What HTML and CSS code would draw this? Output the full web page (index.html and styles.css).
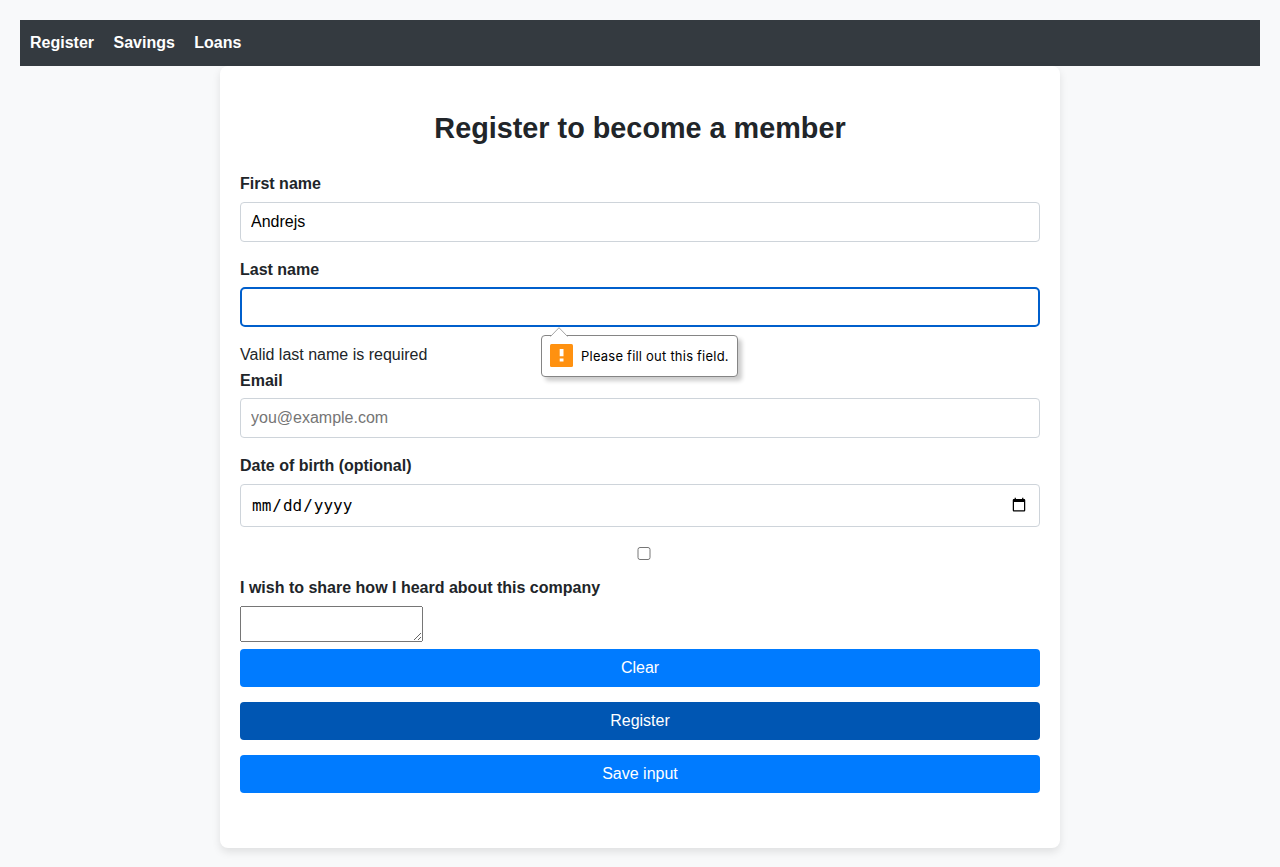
FILE: index.html
```html
<!DOCTYPE html>
<html lang="en">
<head>
<meta charset="utf-8">
<title>Register</title>
<link rel="stylesheet" href="styles.css">
</head>
<body>
<nav class="navbar">
  <a href="#">Register</a>
  <a href="#">Savings</a>
  <a href="#">Loans</a>
</nav>
<main class="card">
  <h1>Register to become a member</h1>
  <form novalidate>
    <label for="first">First name</label>
    <input class="field" id="first" type="text" value="Andrejs">
    <label for="last">Last name</label>
    <div class="anchor">
      <input class="field field-active" id="last" type="text">
      <div class="bubble">
        <svg class="bubble-arrow" width="18" height="10" viewBox="0 0 18 10"><path d="M.5 9.5 9 .7 17.500 9.500" fill="#fff" stroke="#a5a5a5"/></svg>
        <svg class="bubble-icon" width="23" height="23" viewBox="0 0 23 23"><rect width="23" height="23" rx="1.500" fill="#ff9110"/><path d="M9.700 5h3.800v7.300H9.700zM9.700 14.500h3.800v3H9.700z" fill="#fff"/></svg>
        <span>Please fill out this field.</span>
      </div>
    </div>
    <div class="error">Valid last name is required</div>
    <label for="email">Email</label>
    <input class="field" id="email" type="email" placeholder="you@example.com">
    <label for="dob">Date of birth (optional)</label>
    <input class="field field-date" id="dob" type="date">
    <input class="check" id="share" type="checkbox">
    <label for="share">I wish to share how I heard about this company</label>
    <textarea></textarea>
    <button class="btn" type="button">Clear</button>
    <button class="btn btn-pressed" type="button">Register</button>
    <button class="btn" type="button">Save input</button>
  </form>
</main>
</body>
</html>
```

FILE: styles.css
```css
body {
  margin: 0;
  padding: 20px;
  background: #f8f9fa;
  color: #212529;
  font: 16px/1.6 "Liberation Sans", Arial, sans-serif;
}
.navbar {
  background: #343a40;
  padding: 10px;
  height: 26px;
}
.navbar a {
  color: #fff;
  text-decoration: none;
  font-weight: bold;
  margin-right: 15px;
}
.card {
  box-sizing: border-box;
  width: 840px;
  height: 782px;
  margin: 0 auto;
  padding: 20px;
  background: #fff;
  border-radius: 8px;
  box-shadow: 0 4px 8px rgba(0, 0, 0, 0.1);
}
h1 {
  margin: 19px 0 20px;
  font-size: 28.8px;
  line-height: 46px;
  text-align: center;
}
label {
  display: block;
  margin-bottom: 5px;
  font-weight: bold;
}
.field {
  display: block;
  box-sizing: border-box;
  width: 100%;
  margin: 0 0 15px;
  padding: 10px;
  border: 1px solid #ced4da;
  border-radius: 4px;
  font-size: 16px;
  font-family: "Liberation Sans", Arial, sans-serif;
}
.field-active {
  border: 2px solid #005fcc;
  border-radius: 5px;
  padding: 9px;
}
.field-date {
  height: 43px;
  font-family: "DejaVu Sans Mono", monospace;
}
.anchor {
  position: relative;
}
.bubble {
  position: absolute;
  z-index: 1;
  top: 48px;
  left: 301px;
  box-sizing: border-box;
  display: flex;
  align-items: center;
  gap: 8px;
  width: 197px;
  height: 42px;
  padding: 0 8px 1px;
  background: #fff;
  border: 1px solid #858585;
  border-radius: 4px;
  box-shadow: 4px 4px 4px rgba(0, 0, 0, 0.2);
  color: #000;
  font: 13px "Inter", sans-serif;
  letter-spacing: 0.22px;
  white-space: nowrap;
}
.bubble-arrow {
  position: absolute;
  top: -9px;
  left: 8px;
}
.check {
  display: block;
  width: 100%;
  margin: 20px 0 15px 4px;
}
textarea {
  display: block;
  box-sizing: border-box;
  width: 183px;
  height: 36px;
  margin: 0 0 7px;
}
.btn {
  display: block;
  width: 100%;
  height: 38px;
  margin: 0 0 15px;
  padding: 0;
  border: 0;
  border-radius: 4px;
  background: #007bff;
  color: #fff;
  font: 16px "Liberation Sans", Arial, sans-serif;
}
.btn-pressed {
  background: #0056b3;
}
```
